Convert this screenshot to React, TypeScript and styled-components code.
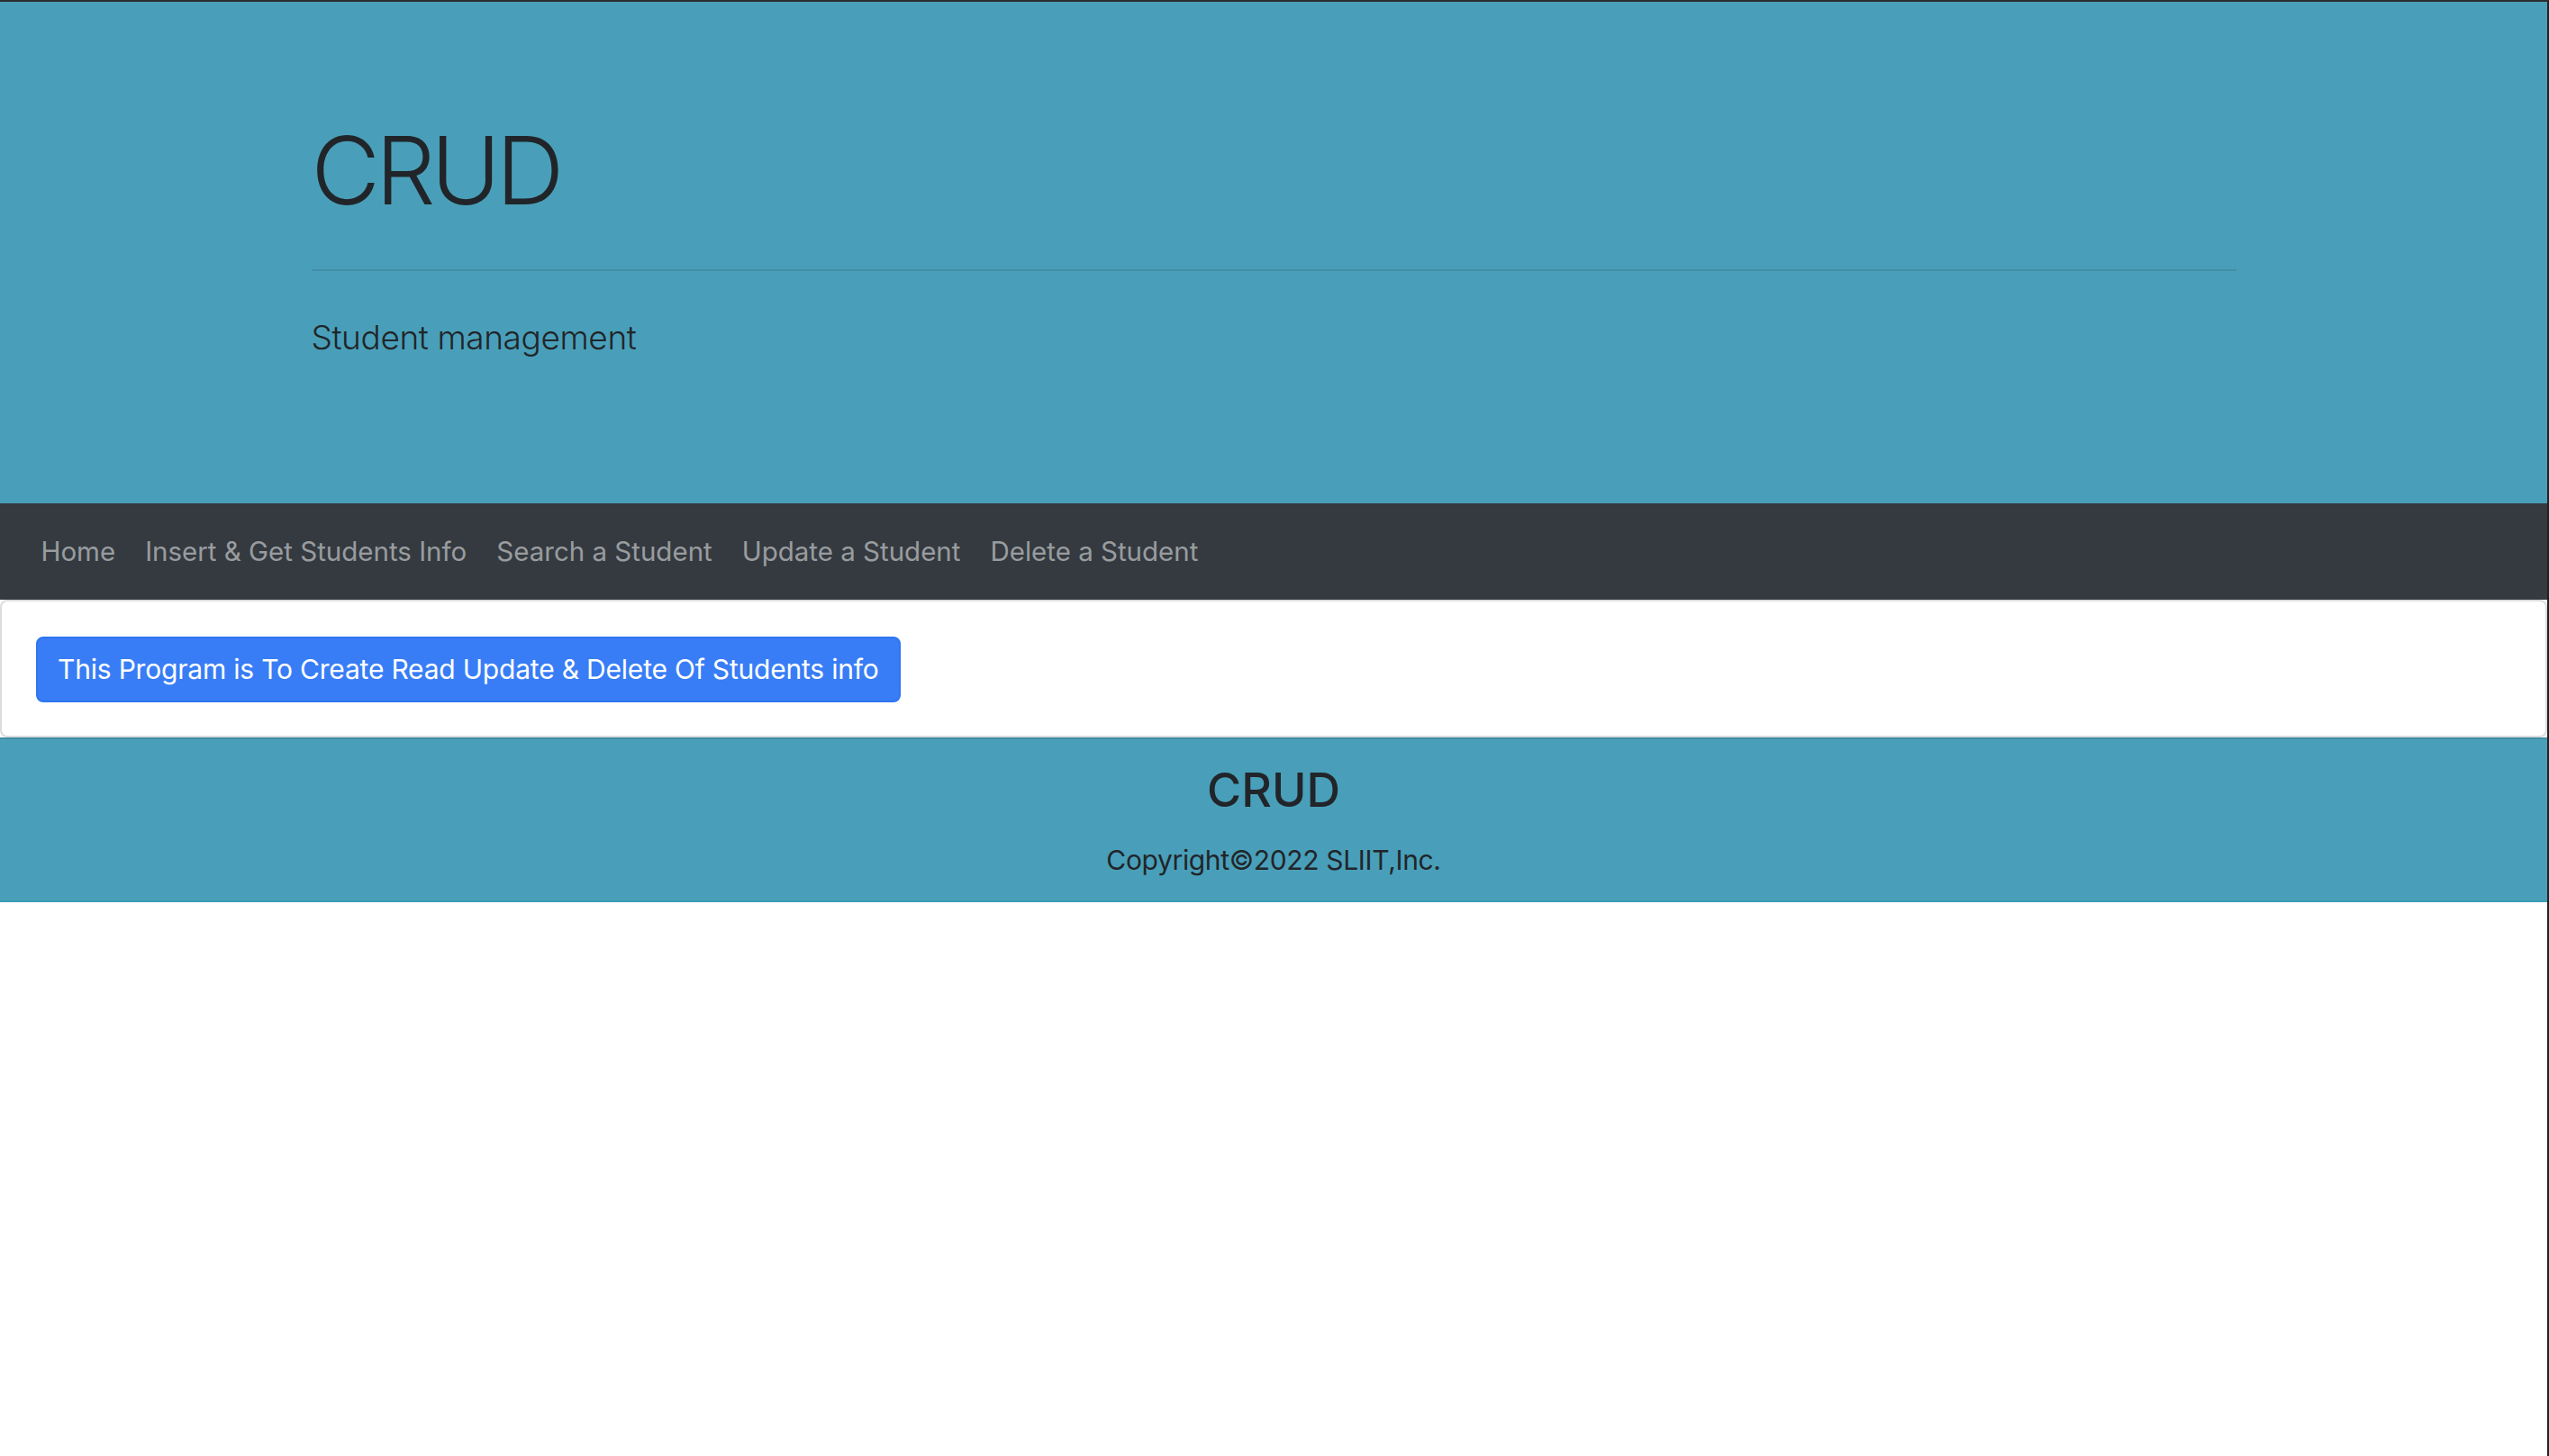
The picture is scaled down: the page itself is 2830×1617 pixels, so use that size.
import React from 'react';
import styled, { createGlobalStyle } from 'styled-components';

const GlobalStyle = createGlobalStyle`
  html, body {
    margin: 0;
    padding: 0;
    background: #ffffff;
  }
  body {
    font-family: Inter, "Noto Sans", sans-serif;
    color: #212529;
  }
  * {
    box-sizing: border-box;
  }
`;

const Page = styled.div`
  display: flex;
  flex-direction: column;
  min-height: 100vh;
  border-top: 2px solid #2a2d30;
  border-right: 2px solid #1f2224;
`;

const Jumbotron = styled.header`
  background: #499fb9;
  padding: 124px 0 156px;
`;

const Container = styled.div`
  max-width: 2137px;
  margin: 0 auto;
`;

const Display = styled.h1`
  margin: 0;
  font-size: 105px;
  font-weight: 300;
  line-height: 1.2;
  letter-spacing: -5px;
  color: #212529;
`;

const Rule = styled.hr`
  margin: 47px 0 46px;
  border: 0;
  border-top: 2px solid rgba(0, 0, 0, 0.1);
`;

const Lead = styled.p`
  margin: 0;
  font-size: 37px;
  font-weight: 300;
  line-height: 1.5;
  letter-spacing: -0.4px;
`;

const NavBar = styled.nav`
  display: flex;
  align-items: center;
  background: #343a40;
  padding: 31.5px 29px 32px;
`;

const NavLink = styled.a`
  padding: 0 16.5px;
  font-size: 29.5px;
  line-height: 1.5;
  color: rgba(255, 255, 255, 0.5);
  text-decoration: none;
  cursor: pointer;
`;

const Card = styled.section`
  display: flex;
  border: 2px solid #dcdcdc;
  border-radius: 8px;
  padding: 39px 38px 37px;
  background: #ffffff;
`;

const PrimaryButton = styled.button`
  font-family: inherit;
  font-size: 30px;
  line-height: 1.5;
  letter-spacing: -0.2px;
  color: #ffffff;
  background: #387df6;
  border: 2px solid #2f76f0;
  border-radius: 8px;
  padding: 11.8px 22px;
  cursor: pointer;
`;

const Footer = styled.footer`
  background: #499fb9;
  border-top: 2px solid #3f8ea6;
  border-bottom: 2px solid #3a9cb8;
  padding: 26px 0 22px;
  text-align: center;
`;

const FooterTitle = styled.h3`
  margin: 0 0 24px;
  font-size: 52px;
  font-weight: 500;
  line-height: 1.2;
  color: #212529;
`;

const Copyright = styled.p`
  margin: 0;
  font-size: 30px;
  line-height: 1.5;
  letter-spacing: -0.35px;
  color: #212529;
`;

const links = [
  'Home',
  'Insert & Get Students Info',
  'Search a Student',
  'Update a Student',
  'Delete a Student',
];

const App: React.FC = () => {
  return (
    <>
      <GlobalStyle />
      <Page>
        <Jumbotron>
          <Container>
            <Display>CRUD</Display>
            <Rule />
            <Lead>Student management</Lead>
          </Container>
        </Jumbotron>
        <NavBar>
          {links.map((label) => (
            <NavLink key={label}>{label}</NavLink>
          ))}
        </NavBar>
        <Card>
          <PrimaryButton>This Program is To Create Read Update &amp; Delete Of Students info</PrimaryButton>
        </Card>
        <Footer>
          <FooterTitle>CRUD</FooterTitle>
          <Copyright>Copyright©2022 SLIIT,Inc.</Copyright>
        </Footer>
      </Page>
    </>
  );
};

export default App;
